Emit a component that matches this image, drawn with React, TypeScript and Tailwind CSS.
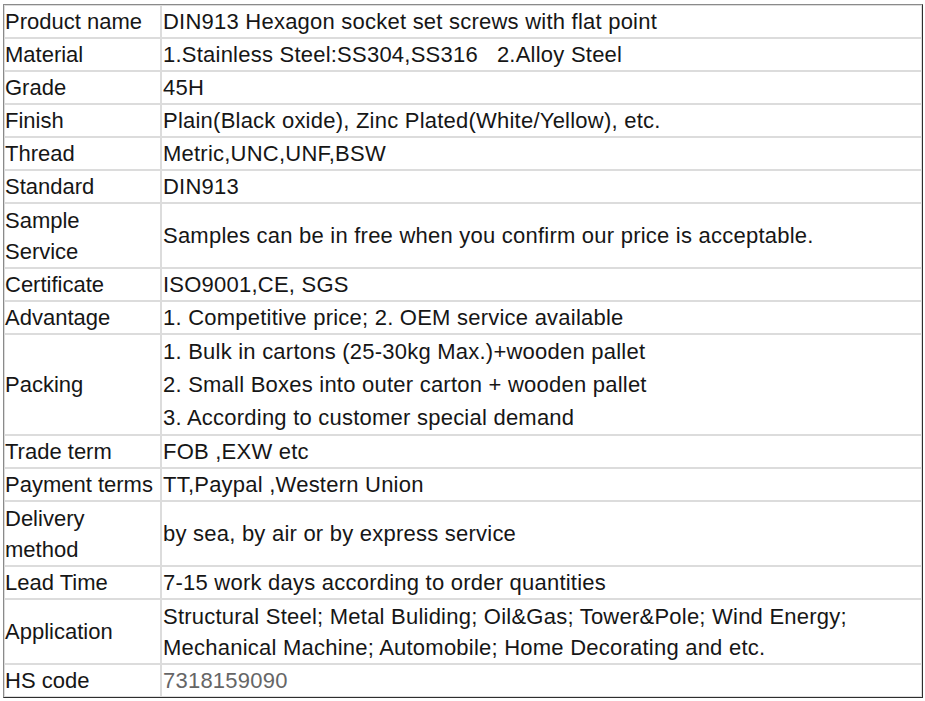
const rows: { label: string; value: React.ReactNode; h?: string }[] = [
  { label: 'Product name', value: 'DIN913 Hexagon socket set screws with flat point' },
  { label: 'Material', value: '1.Stainless Steel:SS304,SS316\u00a0\u00a0\u00a02.Alloy Steel' },
  { label: 'Grade', value: '45H' },
  { label: 'Finish', value: 'Plain(Black oxide), Zinc Plated(White/Yellow), etc.' },
  { label: 'Thread', value: 'Metric,UNC,UNF,BSW' },
  { label: 'Standard', value: 'DIN913' },
  { label: 'Sample Service', value: 'Samples can be in free when you confirm our price is acceptable.', h: 'h-[65px]' },
  { label: 'Certificate', value: 'ISO9001,CE, SGS' },
  { label: 'Advantage', value: '1. Competitive price; 2. OEM service available' },
  {
    label: 'Packing',
    value: (
      <>
        <p className="leading-[33px]">1. Bulk in cartons (25-30kg Max.)+wooden pallet</p>
        <p className="leading-[33px]">2. Small Boxes into outer carton + wooden pallet</p>
        <p className="leading-[33px]">3. According to customer special demand</p>
      </>
    ),
    h: 'h-[99px]',
  },
  { label: 'Trade term', value: 'FOB ,EXW etc' },
  { label: 'Payment terms', value: 'TT,Paypal ,Western Union' },
  { label: 'Delivery method', value: 'by sea, by air or by express service', h: 'h-[65px]' },
  { label: 'Lead Time', value: '7-15 work days according to order quantities' },
  {
    label: 'Application',
    value: 'Structural Steel; Metal Buliding; Oil&Gas; Tower&Pole; Wind Energy; Mechanical Machine; Automobile; Home Decorating and etc.',
    h: 'h-[65px]',
  },
  { label: 'HS code', value: <span className="text-[#666]">7318159090</span> },
]

export default function App() {
  return (
    <div className="bg-white min-h-[701px] pt-[4px] pl-[3px] font-['Liberation_Sans',Arial,sans-serif] text-[22px] text-[#161616]">
      <table className="w-[920px] table-fixed border-separate border-spacing-0 border border-t-[#8a8a8a] border-l-[#8a8a8a] border-r-[#2e2e2e] border-b-[#2e2e2e]">
        <colgroup>
          <col className="w-[157px]" />
          <col />
        </colgroup>
        <tbody>
          {rows.map((r) => (
            <tr key={r.label} className={r.h ?? 'h-[33px]'}>
              <td className="border border-[#dcdcdc] pl-0 pr-[1px] py-0 leading-[31px] align-middle">{r.label}</td>
              <td className="border border-[#dcdcdc] px-[1px] py-0 leading-[31px] align-middle tracking-[0.23px]">{r.value}</td>
            </tr>
          ))}
        </tbody>
      </table>
    </div>
  )
}
